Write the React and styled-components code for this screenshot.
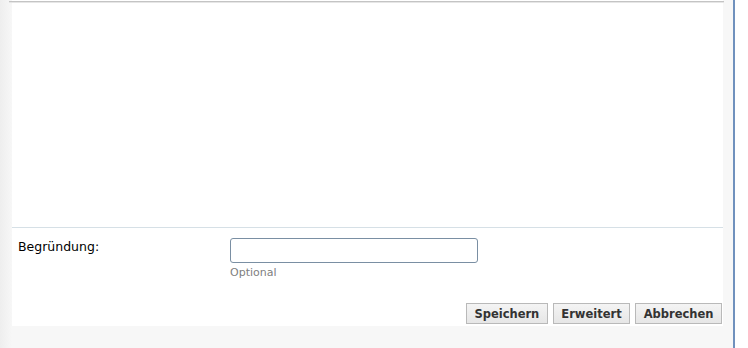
import React from "react";
import styled, { createGlobalStyle } from "styled-components";

const Global = createGlobalStyle`
  html, body { margin: 0; padding: 0; background: #ffffff; }
  body { font-family: "DejaVu Sans", Verdana, sans-serif; }
`;

const Page = styled.div`
  display: flex;
  width: 748px;
  height: 348px;
  background: #ffffff;
`;

const Dialog = styled.div`
  width: 735px;
  flex: none;
  height: 348px;
  box-sizing: border-box;
  border-right: 2px solid #7091bd;
  background: linear-gradient(to right, #eeeeee 0px, #f7f7f7 12px, #f7f7f7 100%);
  padding: 0 10px 0 12px;
  display: flex;
  flex-direction: column;
`;

const Panel = styled.div`
  background: #ffffff;
  height: 326px;
  display: flex;
  flex-direction: column;
`;

const TopRule = styled.div`
  height: 1px;
  margin: 1px -1px 0 -3px;
  background: #c4c4c4;
  box-shadow: 0 1px 0 #e6e6e6;
`;

const Content = styled.div`
  height: 225px;
  border-bottom: 1px solid #d6e0e6;
`;

const FormRow = styled.div`
  display: grid;
  grid-template-columns: 212px 1fr;
  padding: 10px 6px 0 6px;
`;

const Label = styled.label`
  font-size: 12.5px;
  color: #000000;
  padding-top: 1px;
`;

const Field = styled.div`
  display: flex;
  flex-direction: column;
`;

const Input = styled.input`
  box-sizing: border-box;
  width: 248px;
  height: 25px;
  border: 1px solid #7a8fa3;
  border-radius: 3px;
  outline: none;
  background: #ffffff;
`;

const Hint = styled.span`
  font-size: 11px;
  color: #808080;
  margin-top: 3px;
`;

const Buttons = styled.div`
  display: flex;
  justify-content: flex-end;
  gap: 5px;
  padding: 24px 1px 0 0;
`;

const Button = styled.button`
  font-family: "DejaVu Sans", Verdana, sans-serif;
  font-weight: bold;
  font-size: 11.5px;
  color: #333333;
  height: 21px;
  padding: 0 7.5px;
  background: linear-gradient(#f4f4f4, #e6e6e6);
  border: 1px solid #b9b9b9;
  border-radius: 0;
`;

export default function App() {
  return (
    <>
      <Global />
      <Page>
        <Dialog>
          <Panel>
            <TopRule />
            <Content />
            <FormRow>
              <Label>Begründung:</Label>
              <Field>
                <Input type="text" />
                <Hint>Optional</Hint>
              </Field>
            </FormRow>
            <Buttons>
              <Button>Speichern</Button>
              <Button>Erweitert</Button>
              <Button>Abbrechen</Button>
            </Buttons>
          </Panel>
        </Dialog>
      </Page>
    </>
  );
}
